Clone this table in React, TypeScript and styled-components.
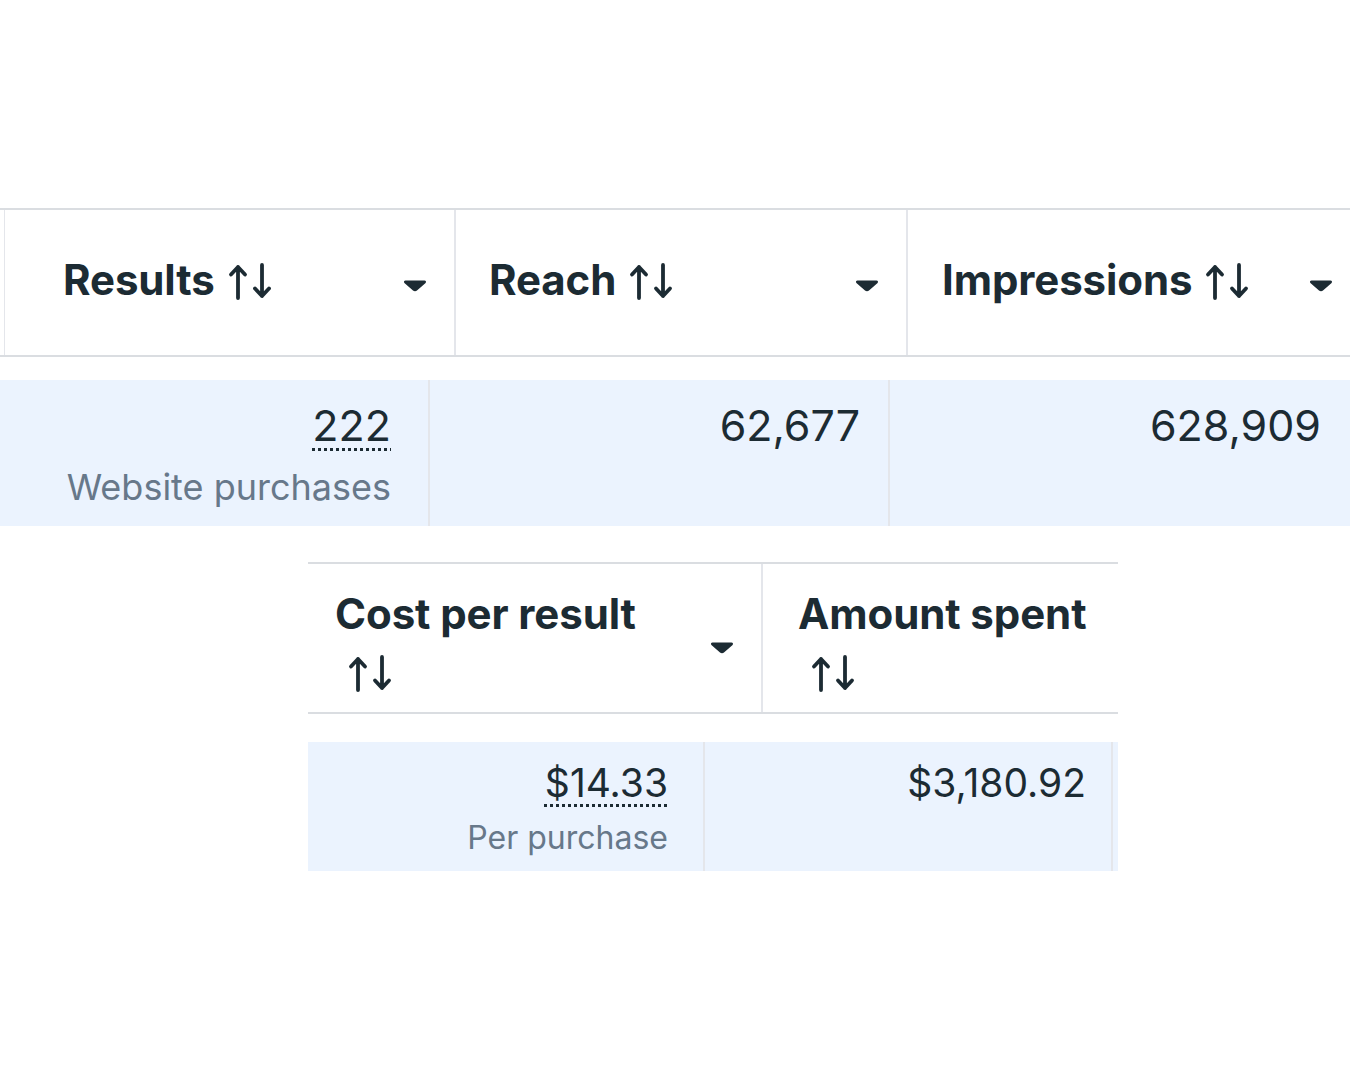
import styled, { createGlobalStyle } from "styled-components";

const GlobalStyle = createGlobalStyle`
  html, body {
    margin: 0;
    padding: 0;
    background: #ffffff;
  }
  body {
    font-family: Inter, "Liberation Sans", sans-serif;
    color: #1c2b33;
  }
`;

const color = {
  text: "#1c2b33",
  sub: "#67788a",
  row: "#ebf3fe",
  border: "#dadde1",
  divider: "#e4e6eb",
};

type Column = {
  label: string;
  width: number;
  padLeft: number;
  caret?: boolean;
};

const topHeaders: Column[] = [
  { label: "Results", width: 451, padLeft: 58, caret: true },
  { label: "Reach", width: 452, padLeft: 33, caret: true },
  { label: "Impressions", width: 452, padLeft: 34, caret: true },
];

const bottomHeaders: Column[] = [
  { label: "Cost per result", width: 455, padLeft: 27, caret: true },
  { label: "Amount spent", width: 355, padLeft: 35 },
];

const SortIcon = () => (
  <SortSvg width="46" height="37" viewBox="0 0 46 37" fill="none">
    <path
      d="M10 35V4M3 11.5L10 4l7 7.5"
      stroke={color.text}
      strokeWidth="3.8"
      strokeLinecap="round"
      strokeLinejoin="round"
    />
    <path
      d="M34 2v31M27 25.5l7 7.5 7-7.5"
      stroke={color.text}
      strokeWidth="3.8"
      strokeLinecap="round"
      strokeLinejoin="round"
    />
  </SortSvg>
);

const Caret = ({ offset }: { offset: number }) => (
  <CaretSvg width="24" height="14" viewBox="0 0 24 14" $offset={offset}>
    <path
      d="M2.5 2.5h19c1.4 0 2 1.4 1.1 2.4l-8.6 7.6c-1.1 1-2.9 1-4 0L1.4 4.9c-.9-1-.3-2.4 1.1-2.4z"
      fill={color.text}
    />
  </CaretSvg>
);

const HeaderRow = ({ columns, lead }: { columns: Column[]; lead?: boolean }) => (
  <HeaderBar $lead={lead}>
    {lead && <Stub />}
    {columns.map((col, i) => (
      <HeaderCell
        key={col.label}
        $width={col.width}
        $padLeft={col.padLeft}
        $last={i === columns.length - 1}
        $lead={lead}
      >
        <Label $withCaret={col.caret}>
          <LabelText>{col.label}</LabelText>
          <SortIcon />
        </Label>
        {col.caret && <Caret offset={lead ? 10 : 8} />}
      </HeaderCell>
    ))}
  </HeaderBar>
);

const App = () => {
  return (
    <>
      <GlobalStyle />
      <Page>
        <TopTable>
          <HeaderRow columns={topHeaders} lead />
          <DataRow>
            <DataCell $width={430} $padRight={37} $padTop={20} $divider>
              <Value $size={43} $dotted>222</Value>
              <Caption $size={36} $gap={15}>Website purchases</Caption>
            </DataCell>
            <DataCell $width={460} $padRight={28} $padTop={20} $divider>
              <Value $size={43}>62,677</Value>
            </DataCell>
            <DataCell $width={460} $padRight={29} $padTop={20}>
              <Value $size={43}>628,909</Value>
            </DataCell>
          </DataRow>
        </TopTable>

        <BottomTable>
          <HeaderRow columns={bottomHeaders} />
          <DataRow $short>
            <DataCell $width={397} $padRight={35} $padTop={16} $divider>
              <Value $size={39} $dotted>$14.33</Value>
              <Caption $size={32} $gap={8}>Per purchase</Caption>
            </DataCell>
            <DataCell $width={408} $padRight={25} $padTop={16} $divider>
              <Value $size={39}>$3,180.92</Value>
            </DataCell>
            <Tail />
          </DataRow>
        </BottomTable>
      </Page>
    </>
  );
};

export default App;

const Page = styled.div`
  width: 1350px;
  height: 1080px;
  overflow: hidden;
  padding-top: 208px;
  box-sizing: border-box;
  display: flex;
  flex-direction: column;
`;

const TopTable = styled.div`
  display: flex;
  flex-direction: column;
  gap: 23px;
`;

const BottomTable = styled.div`
  display: flex;
  flex-direction: column;
  gap: 28px;
  margin-top: 36px;
  margin-left: 308px;
  width: 810px;
`;

const HeaderBar = styled.div<{ $lead?: boolean }>`
  display: flex;
  border-top: 2px solid ${color.border};
  border-bottom: 2px solid ${color.border};
  height: ${({ $lead }) => ($lead ? "149px" : "152px")};
  box-sizing: border-box;
`;

const Stub = styled.div`
  width: 4px;
  flex-shrink: 0;
  border-right: 1px solid ${color.divider};
`;

const HeaderCell = styled.div<{ $width: number; $padLeft: number; $last?: boolean; $lead?: boolean }>`
  display: flex;
  align-items: center;
  width: ${({ $width }) => $width}px;
  flex-shrink: 0;
  box-sizing: border-box;
  padding: ${({ $lead }) => ($lead ? "0 27px 5px" : "10px 27px 0")};
  padding-left: ${({ $padLeft }) => $padLeft}px;
  border-right: ${({ $last }) => ($last ? "none" : `2px solid ${color.divider}`)};
`;

const Label = styled.div<{ $withCaret?: boolean }>`
  flex: 1;
  font-size: 42px;
  font-weight: 700;
  line-height: 58px;
  letter-spacing: -0.1px;
  color: ${color.text};
  margin-right: ${({ $withCaret }) => ($withCaret ? "40px" : "0")};
`;

const LabelText = styled.span`
  white-space: nowrap;
`;

const SortSvg = styled.svg`
  display: inline-block;
  vertical-align: -5px;
  margin-left: 13px;
`;

const CaretSvg = styled.svg<{ $offset: number }>`
  flex-shrink: 0;
  margin-top: ${({ $offset }) => $offset}px;
`;

const DataRow = styled.div<{ $short?: boolean }>`
  display: flex;
  background: ${color.row};
  height: ${({ $short }) => ($short ? "129px" : "146px")};
`;

const DataCell = styled.div<{ $width: number; $padRight: number; $padTop: number; $divider?: boolean }>`
  width: ${({ $width }) => $width}px;
  flex-shrink: 0;
  box-sizing: border-box;
  display: flex;
  flex-direction: column;
  align-items: flex-end;
  padding: ${({ $padTop }) => $padTop}px ${({ $padRight }) => $padRight}px 0 0;
  border-right: ${({ $divider }) => ($divider ? `2px solid ${color.divider}` : "none")};
`;

const Value = styled.span<{ $size: number; $dotted?: boolean }>`
  font-size: ${({ $size }) => $size}px;
  line-height: 50px;
  color: ${color.text};
  text-decoration: ${({ $dotted }) => ($dotted ? "underline dotted" : "none")};
  text-decoration-thickness: 3px;
  text-underline-offset: 7px;
`;

const Caption = styled.span<{ $size: number; $gap: number }>`
  font-size: ${({ $size }) => $size}px;
  line-height: 44px;
  margin-top: ${({ $gap }) => $gap}px;
  color: ${color.sub};
`;

const Tail = styled.div`
  flex: 1;
`;
